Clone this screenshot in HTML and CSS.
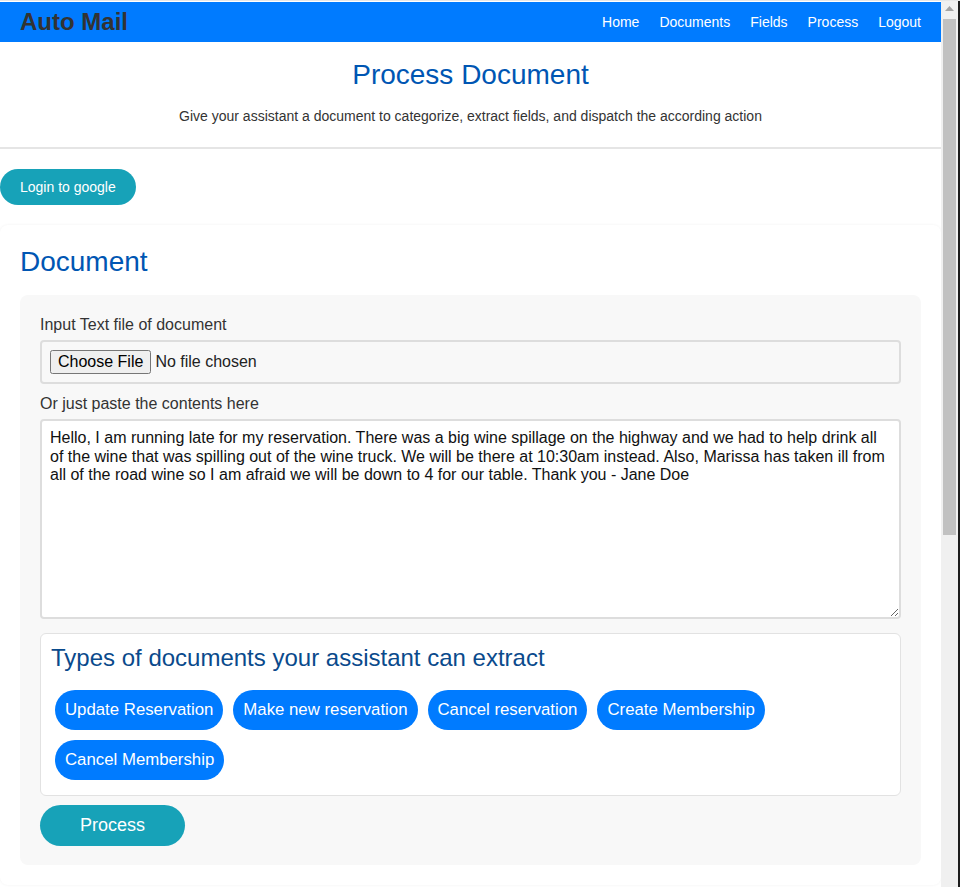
FILE: index.html
```html
<!DOCTYPE html>
<html lang="en">
<head>
<meta charset="utf-8">
<title>Auto Mail - Process Document</title>
<link rel="stylesheet" href="styles.css">
</head>
<body>
<div class="window">
  <div class="page">
    <nav class="navbar">
      <div class="brand">Auto Mail</div>
      <ul class="nav-links">
        <li><a href="#">Home</a></li>
        <li><a href="#">Documents</a></li>
        <li><a href="#">Fields</a></li>
        <li><a href="#">Process</a></li>
        <li><a href="#">Logout</a></li>
      </ul>
    </nav>

    <header class="page-header">
      <h1>Process Document</h1>
      <p>Give your assistant a document to categorize, extract fields, and dispatch the according action</p>
    </header>

    <div class="login-row">
      <button class="btn-teal btn-login">Login to google</button>
    </div>

    <section class="card">
      <h2 class="card-title">Document</h2>
      <div class="panel">
        <label class="field-label">Input Text file of document</label>
        <div class="file-box">
          <input type="file" class="file-input">
        </div>
        <label class="field-label">Or just paste the contents here</label>
        <textarea class="doc-text">Hello, I am running late for my reservation. There was a big wine spillage on the highway and we had to help drink all of the wine that was spilling out of the wine truck. We will be there at 10:30am instead. Also, Marissa has taken ill from all of the road wine so I am afraid we will be down to 4 for our table. Thank you - Jane Doe</textarea>
        <div class="types-box">
          <h3 class="types-title">Types of documents your assistant can extract</h3>
          <div class="chips">
            <span class="chip">Update Reservation</span>
            <span class="chip">Make new reservation</span>
            <span class="chip">Cancel reservation</span>
            <span class="chip">Create Membership</span>
            <span class="chip">Cancel Membership</span>
          </div>
        </div>
        <button class="btn-teal btn-process">Process</button>
      </div>
    </section>

    <section class="card card-next"></section>
  </div>

  <div class="scrollbar" aria-hidden="true">
    <div class="scroll-arrow">
      <svg width="9" height="5" viewBox="0 0 9 5"><path d="M0 5 L4.5 0 L9 5 Z" fill="#a3a3a3"/></svg>
    </div>
    <div class="scroll-thumb"></div>
  </div>
  <div class="frame-edge"></div>
</div>
</body>
</html>
```

FILE: styles.css
```css
* {
  box-sizing: border-box;
}

html, body {
  margin: 0;
  padding: 0;
}

body {
  font-family: "Liberation Sans", Arial, sans-serif;
  color: #333;
  background: #fff;
  height: 100vh;
  overflow: hidden;
}

.window {
  display: flex;
  height: 100%;
  border-top: 1px solid #e6e6e6;
}

.page {
  flex: 1;
  min-width: 0;
  overflow: hidden;
  padding-top: 1px;
}

/* simulated classic scrollbar of the screenshot window */
.scrollbar {
  width: 17px;
  flex: none;
  background: #f0f0f0;
  display: flex;
  flex-direction: column;
  align-items: center;
}

.scroll-arrow {
  height: 17px;
  width: 17px;
  display: flex;
  align-items: center;
  justify-content: center;
  padding-bottom: 2px;
}

.scroll-thumb {
  width: 13px;
  height: 516px;
  margin-top: 1px;
  background: #c1c1c1;
}

.frame-edge {
  width: 2px;
  flex: none;
  background: #1c1c1c;
}

.navbar {
  display: flex;
  align-items: center;
  justify-content: space-between;
  height: 40px;
  background: #007bff;
  padding: 0 10px 0 20px;
}

.brand {
  font-size: 24px;
  font-weight: bold;
  color: #333;
}

.nav-links {
  display: flex;
  list-style: none;
  margin: 0;
  padding: 0;
}

.nav-links a {
  display: block;
  padding: 0 10px;
  color: #fff;
  text-decoration: none;
  font-size: 14px;
}

.page-header {
  text-align: center;
  padding: 17px 0 0;
  border-bottom: 2px solid #e5e5e5;
  height: 107px;
}

.page-header h1 {
  margin: 0;
  font-size: 28px;
  line-height: 32px;
  font-weight: normal;
  color: #0056b3;
}

.page-header p {
  margin: 17px 0 0;
  font-size: 14px;
  line-height: 16px;
  color: #333;
}

.login-row {
  padding: 20px 0;
}

.btn-teal {
  background: #17a2b8;
  color: #fff;
  border: none;
  border-radius: 999px;
  font-family: "Liberation Sans", Arial, sans-serif;
  cursor: pointer;
}

.btn-login {
  font-size: 14px;
  height: 36px;
  padding: 0 20px;
}

.card {
  background: #fff;
  border-radius: 8px;
  box-shadow: 0 0 3px rgba(0, 0, 0, 0.06);
  padding: 22px 20px 20px;
  margin-right: 0;
}

.card-title {
  margin: 0 0 18px;
  font-size: 28px;
  line-height: 30px;
  font-weight: normal;
  color: #0056b3;
}

.panel {
  background: #f8f8f8;
  border-radius: 8px;
  padding: 21px 20px 19px;
  display: flex;
  flex-direction: column;
  align-items: flex-start;
}

.field-label {
  display: block;
  font-size: 16px;
  line-height: 18px;
  color: #333;
  margin: 0 0 6px;
}

.file-box {
  width: 100%;
  border: 2px solid #ddd;
  border-radius: 4px;
  padding: 8px;
  margin-bottom: 11px;
}

.file-input {
  font-family: "Liberation Sans", Arial, sans-serif;
  font-size: 16px;
  color: #222;
}

.doc-text {
  width: 100%;
  height: 200px;
  border: 2px solid #ddd;
  border-radius: 4px;
  padding: 8px;
  font-family: "Liberation Sans", Arial, sans-serif;
  font-size: 16px;
  line-height: 18.5px;
  color: #111;
  background: #fff;
  resize: vertical;
  margin: 0 0 14px;
  display: block;
}

.types-box {
  width: 100%;
  background: #fff;
  border: 1px solid #e2e2e2;
  border-radius: 6px;
  padding: 10px 10px 15px;
}

.types-title {
  margin: 0 0 18px;
  font-size: 24px;
  line-height: 28px;
  font-weight: normal;
  color: #0a4a8c;
}

.chips {
  display: flex;
  flex-wrap: wrap;
  margin: -5px;
  padding-left: 4px;
}

.chip {
  display: inline-flex;
  align-items: center;
  height: 40px;
  padding: 0 10px;
  margin: 5px;
  background: #007bff;
  color: #fff;
  font-size: 16.8px;
  border-radius: 20px;
}

.btn-process {
  margin-top: 9px;
  font-size: 18px;
  height: 41px;
  padding: 0 40px;
}

.card-next {
  margin-top: 20px;
  height: 640px;
}
```
